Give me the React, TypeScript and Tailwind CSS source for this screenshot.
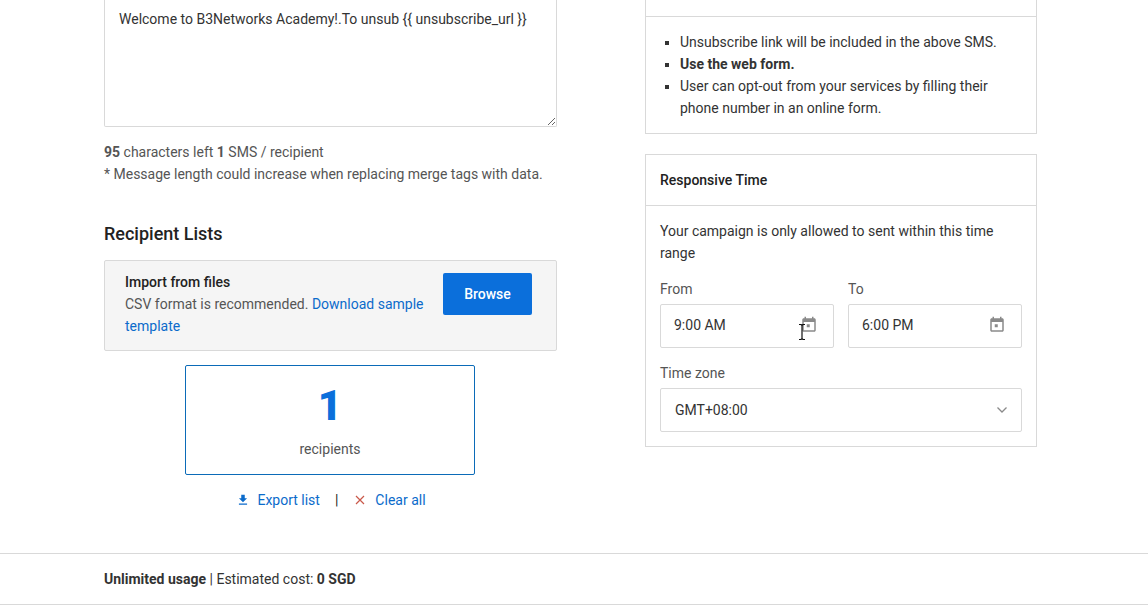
import React from "react";

const CalendarIcon = () => (
  <svg width="18" height="18" viewBox="0 0 24 24" fill="#8a8a8a">
    <path d="M16 1v2H8V1H6v2H5c-1.11 0-1.99.9-1.99 2L3 19c0 1.1.89 2 2 2h14c1.1 0 2-.9 2-2V5c0-1.1-.9-2-2-2h-1V1h-2zm3 18H5V8h14v11z" />
    <path d="M9 11h4v4H9z" />
  </svg>
);

const TimeField = ({ label, value }: { label: string; value: string }) => (
  <div className="flex-1">
    <div className="text-[#555] leading-[22px] mb-1">{label}</div>
    <div className="h-11 border border-[#d9d9d9] rounded-[2px] flex items-center justify-between pl-[13px] pr-[15px] pb-[2px] text-[#333]">
      <span>{value}</span>
      <CalendarIcon />
    </div>
  </div>
);

export default function App() {
  return (
    <div
      className="relative h-[616px] w-[1148px] overflow-hidden bg-white text-sm text-[#333]"
      style={{ fontFamily: "Roboto, sans-serif" }}
    >
      <div className="flex h-[553px] pl-[104px] pr-[111px] gap-[88px]">
        <div className="w-[453px]">
          <textarea
            readOnly
            className="block w-full h-[127px] resize-y border border-t-0 border-[#d9d9d9] rounded-b-[2px] px-[14px] pt-2 leading-[22px] text-[#333] outline-none"
            defaultValue="Welcome to B3Networks Academy!.To unsub {{ unsubscribe_url }}"
          />
          <div className="mt-[14px] leading-[22px] text-[#555]">
            <div>
              <span className="font-bold">95</span> characters left{" "}
              <span className="font-bold">1</span> SMS / recipient
            </div>
            <div>* Message length could increase when replacing merge tags with data.</div>
          </div>
          <h2 className="mt-[37px] text-lg font-medium leading-6 text-[#222]">Recipient Lists</h2>
          <div className="mt-[14px] flex justify-between border border-[#d9d9d9] bg-[#f5f5f5] rounded-[2px] pl-5 pr-6 pt-[10px] pb-[13px] h-[91px]">
            <div className="w-[306px] leading-[22px] text-[#555]">
              <div className="font-medium text-[#222]">Import from files</div>
              <div>
                CSV format is recommended.{" "}
                <a className="text-[#0b6bcb]">Download sample template</a>
              </div>
            </div>
            <button className="mt-[2px] w-[89px] h-[42px] bg-[#0b6fdb] text-white font-medium rounded-[2px]">
              Browse
            </button>
          </div>
          <div className="ml-[81px] mt-[14px] w-[290px] h-[110px] border border-[#0b6bb8] rounded-[2px] flex flex-col items-center">
            <div className="mt-[15px] text-[42px] leading-[50px] font-black text-[#0b6fdb]">1</div>
            <div className="mt-[7px] leading-[22px] text-[#555]">recipients</div>
          </div>
          <div className="mt-[14px] flex items-center justify-center pl-[1px] leading-[22px] text-[#0b6bcb]">
            <svg width="14" height="14" viewBox="0 0 24 24" fill="#0b6bcb" className="mr-[7px]">
              <path d="M19 9h-4V3H9v6H5l7 7 7-7zM5 18v2h14v-2H5z" />
            </svg>
            <span>Export list</span>
            <span className="ml-[15px] mr-[16px] text-[#222]">|</span>
            <svg width="12" height="12" viewBox="0 0 12 12" stroke="#c9594a" strokeWidth="1.2" className="mr-[9px]">
              <path d="M2 2l8 8M10 2l-8 8" />
            </svg>
            <span>Clear all</span>
          </div>
        </div>

        <div className="w-[392px]">
          <div className="border border-t-0 border-[#d9d9d9] h-[134px]">
            <div className="h-4 border-b border-[#d9d9d9] box-content" />
            <ul className="mt-[14px] list-[square] pl-[34px] pr-4 leading-[22px] text-[#333]">
              <li>Unsubscribe link will be included in the above SMS.</li>
              <li className="font-bold">Use the web form.</li>
              <li>User can opt-out from your services by filling their phone number in an online form.</li>
            </ul>
          </div>
          <div className="mt-5 border border-[#d9d9d9] h-[293px]">
            <div className="h-[51px] border-b border-[#d9d9d9] flex items-center px-[14px] font-medium text-[#222]">
              Responsive Time
            </div>
            <div className="px-[14px] pt-[14px]">
              <p className="leading-[22px] text-[#333]">
                Your campaign is only allowed to sent within this time range
              </p>
              <div className="mt-[14px] flex gap-[14px]">
                <TimeField label="From" value="9:00 AM" />
                <TimeField label="To" value="6:00 PM" />
              </div>
              <div className="mt-[14px] text-[#555] leading-[22px] mb-1">Time zone</div>
              <div className="h-11 border border-[#d9d9d9] rounded-[2px] flex items-center justify-between pl-[14px] pr-[13px] text-[#333]">
                <span>GMT+08:00</span>
                <svg width="12" height="8" viewBox="0 0 12 8" fill="none" stroke="#8a8a8a" strokeWidth="1.3">
                  <path d="M1.5 1.5L6 6l4.5-4.5" />
                </svg>
              </div>
            </div>
          </div>
        </div>
      </div>

      <div className="h-[52px] border-y border-[#d9d9d9] flex items-center pl-[104px] text-[#333]">
        <span>
          <span className="font-bold">Unlimited usage</span> | Estimated cost:{" "}
          <span className="font-bold">0 SGD</span>
        </span>
      </div>

      {/* text cursor left over the From field */}
      <svg width="8" height="16" viewBox="0 0 8 16" fill="none" stroke="#111" strokeWidth="1.2" className="absolute left-[798px] top-[324px]">
        <path d="M1 .5h2l1 1 1-1h2M4 1.5v13M1 15.5h2l1-1 1 1h2" />
      </svg>
    </div>
  );
}
